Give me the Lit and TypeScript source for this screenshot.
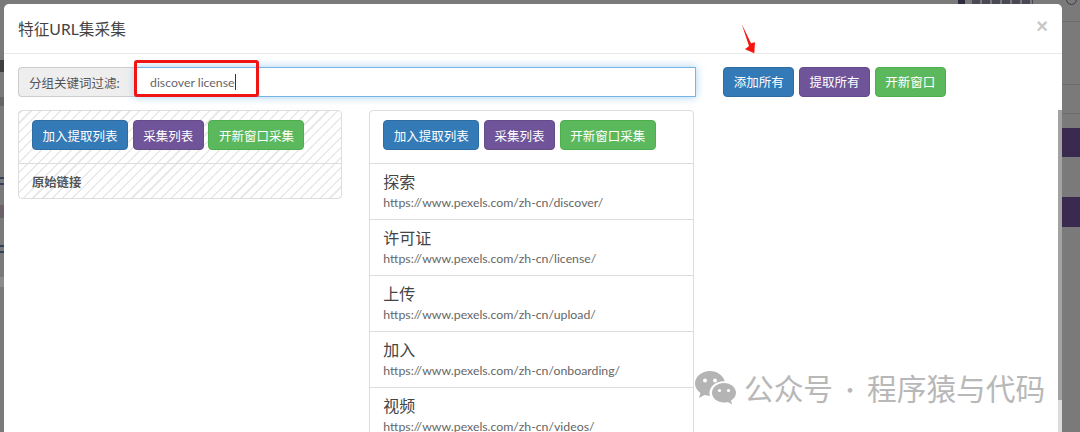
import { LitElement, html, css, svg } from "lit";
import { customElement } from "lit/decorators.js";

const items = [
  ["探索", "https://www.pexels.com/zh-cn/discover/"],
  ["许可证", "https://www.pexels.com/zh-cn/license/"],
  ["上传", "https://www.pexels.com/zh-cn/upload/"],
  ["加入", "https://www.pexels.com/zh-cn/onboarding/"],
  ["视频", "https://www.pexels.com/zh-cn/videos/"],
];

@customElement("app-root")
export class AppRoot extends LitElement {
  static styles = css`
    :host {
      display: block;
      position: relative;
      width: 1080px;
      height: 432px;
      overflow: hidden;
      background: #7a7a7a;
      font-family: "Lato", "Noto Sans CJK SC", sans-serif;
      color: #555;
      font-size: 12.5px;
    }
    .bg {
      position: absolute;
      background: #3a2a50;
      left: 1062px;
      width: 18px;
    }
    .bg.a { top: 128px; height: 29px; }
    .bg.b { top: 197px; height: 30px; }
    .bgline {
      position: absolute;
      left: 1062px;
      width: 18px;
      height: 1px;
      background: #6c6c6c;
    }
    .l1 { top: 21px; }
    .l2 { top: 84px; }
    .l3 { top: 113px; }
    .lock {
      position: absolute;
      left: 958px;
      top: 0;
      width: 7px;
      height: 4px;
      background: #2c2c3c;
    }
    .behind {
      position: absolute;
      left: 972px;
      top: 0;
      width: 61px;
      height: 4px;
      background: repeating-linear-gradient(90deg, #4a4a56 0, #4a4a56 8px, #7a7a7a 8px, #7a7a7a 10px);
    }
    .ring {
      position: absolute;
      left: 1066px;
      top: -6px;
      width: 9px;
      height: 9px;
      border: 1px solid #3a3a44;
      border-radius: 50%;
    }
    .side {
      position: absolute;
      left: 0;
      width: 4px;
    }
    .s1 { top: 60px; height: 12px; background: #3f3f3f; }
    .s2 { top: 97px; height: 9px; background: #666; }
    .s3 { top: 177px; height: 9px; background: repeating-linear-gradient(180deg, #33405a 0, #33405a 2px, #7a7a7a 2px, #7a7a7a 6px); }
    .s4 { top: 205px; height: 13px; background: #6d6169; }
    .s5 { top: 245px; height: 10px; background: repeating-linear-gradient(180deg, #33405a 0, #33405a 2px, #7a7a7a 2px, #7a7a7a 6px); }
    .s6 { top: 277px; height: 10px; background: #8c8c8c; }
    .modal {
      position: absolute;
      left: 4px;
      top: 4px;
      width: 1058px;
      height: 440px;
      background: #fff;
      border-radius: 5px 5px 0 0;
      box-sizing: border-box;
    }
    .head {
      height: 50px;
      box-sizing: border-box;
      border-bottom: 1px solid #e8e8e8;
      display: flex;
      align-items: center;
      justify-content: space-between;
      padding: 0 14px;
    }
    .title {
      font-size: 15.7px;
      color: #444;
    }
    .close {
      font-family: "Liberation Sans", sans-serif;
      font-size: 20px;
      font-weight: 700;
      color: #c8c8c8;
      margin-top: -4px;
    }
    .body {
      padding: 13px 14px 0;
    }
    .row {
      display: flex;
      align-items: stretch;
      height: 30px;
    }
    .group {
      display: flex;
      width: 678px;
    }
    .addon {
      width: 117px;
      box-sizing: border-box;
      border: 1px solid #ccc;
      border-right: 0;
      border-radius: 4px 0 0 4px;
      background: #eee;
      color: #555;
      display: flex;
      align-items: center;
      padding-left: 10px;
    }
    .input {
      flex: 1;
      box-sizing: border-box;
      border: 1px solid #76b3e6;
      box-shadow: 0 0 8px rgba(102, 175, 233, 0.6);
      display: flex;
      align-items: center;
      padding-left: 14px;
      background: #fff;
      color: #666;
      font-size: 12.3px;
    }
    .caret {
      width: 1px;
      height: 16px;
      background: #333;
    }
    .actions {
      display: flex;
      gap: 4.7px;
      margin-left: 27.3px;
    }
    .btn {
      box-sizing: border-box;
      height: 29.5px;
      border-radius: 4px;
      border: 1px solid transparent;
      color: #fff;
      display: flex;
      align-items: center;
      justify-content: center;
      font-size: 12.5px;
      padding: 0 9.5px;
    }
    .primary { background: #337ab7; border-color: #2e6da4; }
    .purple { background: #6f5499; border-color: #644b8a; }
    .green { background: #5cb85c; border-color: #4cae4c; }
    .cols {
      display: flex;
      margin-top: 13.3px;
      align-items: flex-start;
    }
    .panel {
      width: 324.3px;
      box-sizing: border-box;
      border: 1px solid #ddd;
      border-radius: 4px;
      background: #fff;
    }
    .panel.left {
      background: repeating-linear-gradient(
        -45deg,
        #e9e9e9 0,
        #e9e9e9 1.5px,
        #fff 1.5px,
        #fff 7px
      );
    }
    .panel.right {
      margin-left: 27px;
    }
    .tools {
      display: flex;
      gap: 4.7px;
      padding: 9px 13px 13px;
      border-bottom: 1px solid #ddd;
    }
    .cell {
      padding: 11px 13px 8px;
      font-weight: 700;
      font-size: 12.3px;
      color: #555;
      line-height: 15px;
    }
    .item {
      height: 56.1px;
      box-sizing: border-box;
      border-bottom: 1px solid #ddd;
      padding: 6px 13px 0;
    }
    .item .n {
      font-size: 16px;
      line-height: 24px;
      color: #444;
    }
    .item .u {
      font-size: 12.3px;
      line-height: 17px;
      color: #666;
    }
    .track {
      position: absolute;
      left: 1058px;
      top: 400px;
      width: 4px;
      height: 32px;
      background: #dcdcdc;
    }
    .scroll {
      position: absolute;
      left: 1058px;
      top: 110px;
      width: 4px;
      height: 290px;
      background: #a3a3a3;
    }
    .mark {
      position: absolute;
      left: 0;
      top: 0;
      width: 100%;
      height: 100%;
      pointer-events: none;
    }
    .redbox {
      position: absolute;
      left: 134px;
      top: 60px;
      width: 125px;
      height: 37px;
      box-sizing: border-box;
      border: 3px solid #f01414;
      border-radius: 3px;
    }
    .wm {
      position: absolute;
      left: 695px;
      top: 370px;
      display: flex;
      align-items: center;
      color: #b8b8b8;
      font-family: "Noto Sans CJK SC", sans-serif;
      font-size: 29.7px;
      line-height: 36px;
      white-space: nowrap;
    }
    .wm svg { margin-right: 8px; }
    .wm .dot {
      width: 34px;
      font-size: 22px;
      text-align: center;
    }
  `;

  private tools() {
    return html`<div class="tools">
      <div class="btn primary">加入提取列表</div>
      <div class="btn purple">采集列表</div>
      <div class="btn green">开新窗口采集</div>
    </div>`;
  }

  render() {
    return html`
      <div class="lock"></div>
      <div class="behind"></div>
      <div class="ring"></div>
      <div class="side s1"></div>
      <div class="side s2"></div>
      <div class="side s3"></div>
      <div class="side s4"></div>
      <div class="side s5"></div>
      <div class="side s6"></div>
      <div class="bg a"></div>
      <div class="bg b"></div>
      <div class="bgline l1"></div>
      <div class="bgline l2"></div>
      <div class="bgline l3"></div>
      <div class="modal">
        <div class="head">
          <div class="title">特征URL集采集</div>
          <div class="close">×</div>
        </div>
        <div class="body">
          <div class="row">
            <div class="group">
              <div class="addon">分组关键词过滤:</div>
              <div class="input">discover license<span class="caret"></span></div>
            </div>
            <div class="actions">
              <div class="btn primary">添加所有</div>
              <div class="btn purple">提取所有</div>
              <div class="btn green">开新窗口</div>
            </div>
          </div>
          <div class="cols">
            <div class="panel left">
              ${this.tools()}
              <div class="cell">原始链接</div>
            </div>
            <div class="panel right">
              ${this.tools()}
              ${items.map(
                ([n, u]) => html`<div class="item">
                  <div class="n">${n}</div>
                  <div class="u">${u}</div>
                </div>`
              )}
            </div>
          </div>
        </div>
      </div>
      <div class="track"></div>
      <div class="scroll"></div>
      <div class="redbox"></div>
      <svg class="mark" viewBox="0 0 1080 432">
        <path d="M741.7 24 L751 43.3 L755 42.3 L754.3 53.3 L745 49.3 L749 46 Z" fill="#f5140f"></path>
      </svg>
      <div class="wm">
        <svg width="41" height="34" viewBox="0 0 41 34">
          ${svg`
            <path fill="#b4b4b4" d="M15 0C6.7 0 0 5.6 0 12.5c0 3.9 2.1 7.2 5.4 9.5L4 27l5.5-2.9c1.7.5 3.5.8 5.5.9-.3-1-.5-2-.5-3 0-6.6 6.3-11.8 14-11.8h1.2C28.2 4.4 22.1 0 15 0z"></path>
            <path fill="#b4b4b4" d="M29 12c-6.6 0-12 4.4-12 9.8 0 5.4 5.4 9.8 12 9.8 1.4 0 2.7-.2 3.9-.6L37 33.5l-1-3.9c3-1.8 5-4.6 5-7.8C41 16.4 35.6 12 29 12z"></path>
            <circle cx="10" cy="9.5" r="2" fill="#fff"></circle>
            <circle cx="20" cy="9.5" r="2" fill="#fff"></circle>
            <circle cx="24.5" cy="19.5" r="1.6" fill="#fff"></circle>
            <circle cx="33.5" cy="19.5" r="1.6" fill="#fff"></circle>
          `}
        </svg>
        <span>公众号</span><span class="dot">·</span><span>程序猿与代码</span>
      </div>
    `;
  }
}
